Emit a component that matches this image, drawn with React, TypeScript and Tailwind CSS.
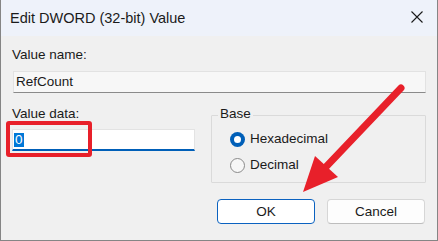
import React from "react";

export default function App() {
  const font = { fontFamily: '"Liberation Sans", Arial, sans-serif' };
  return (
    <div
      className="relative w-[438px] h-[241px] bg-[#f0f0f0] border-l border-r border-b border-[#858585] text-[#1a1a1a] overflow-hidden"
      style={font}
    >
      {/* Title bar */}
      <div className="h-[36px] bg-[#eef2fa] flex items-center justify-between pl-[9px] pr-[14px]">
        <span className="text-[14.5px] leading-none text-[#1b1b1b]">Edit DWORD (32-bit) Value</span>
        <svg width="12" height="12" viewBox="0 0 12 12" className="mb-[2px]">
          <path d="M0.5 0.5 L11.5 11.5 M11.5 0.5 L0.5 11.5" stroke="#1a1a1a" strokeWidth="1.1" />
        </svg>
      </div>

      {/* Body */}
      <div className="pl-[11px] pr-[11px] pt-[11px] text-[13.5px] leading-[16px]">
        <div>Value name:</div>
        <div className="mt-[8px] ml-[1px] h-[22px] bg-[#f7f7f7] border border-[#e2e2e2] border-b-[#8a8a8a] flex items-center pl-[2px]">
          RefCount
        </div>

        <div className="flex mt-[13px] gap-[16px]">
          {/* Left column */}
          <div className="w-[183px]">
            <div>Value data:</div>
            <div className="relative mt-[7px] h-[22px] bg-white border border-[#e3e3e3] border-b-2 border-b-[#005fb8] flex items-center pl-[1px]">
              <span className="bg-[#0078d7] text-white px-[1px] h-[14px] leading-[14px] flex items-center">0</span>
              <div className="absolute left-[-7px] top-[-9px] w-[86px] h-[36px] border-[4px] border-[#e8202a] rounded-[3px]" />
            </div>
          </div>

          {/* Right column */}
          <div className="flex-1 pt-[9px]">
            <div className="relative w-[215px] h-[68px] border border-[#dadada] rounded-[1px]">
              <span className="absolute left-[6px] top-[-10px] bg-[#f0f0f0] px-[2px]">Base</span>
              <div className="absolute left-[18px] top-[15px] flex items-center gap-[5px]">
                <span className="w-[15px] h-[15px] rounded-full bg-[#005fb8] flex items-center justify-center">
                  <span className="w-[7px] h-[7px] rounded-full bg-white" />
                </span>
                <span>Hexadecimal</span>
              </div>
              <div className="absolute left-[18px] top-[41px] flex items-center gap-[5px]">
                <span className="w-[15px] h-[15px] rounded-full bg-[#f7f7f7] border border-[#8a8a8a]" />
                <span>Decimal</span>
              </div>
            </div>
          </div>
        </div>

        {/* Buttons */}
        <div className="flex justify-end gap-[12px] mt-[16px] pr-[1px]">
          <button className="w-[98px] h-[25px] bg-white border border-[#0b62c0] rounded-[4px] text-[13.5px]">
            OK
          </button>
          <button className="w-[98px] h-[25px] bg-[#fdfdfd] border border-[#d6d6d6] border-b-[#bdbdbd] rounded-[4px] text-[13.5px]">
            Cancel
          </button>
        </div>
      </div>

      {/* Arrow annotation */}
      <svg className="absolute left-0 top-0 pointer-events-none" width="438" height="241" viewBox="0 0 438 241">
        <line x1="400" y1="88" x2="322" y2="170" stroke="#e8202a" strokeWidth="7" strokeLinecap="round" />
        <polygon points="302,192 314,156 337,177" fill="#e8202a" />
      </svg>
    </div>
  );
}
